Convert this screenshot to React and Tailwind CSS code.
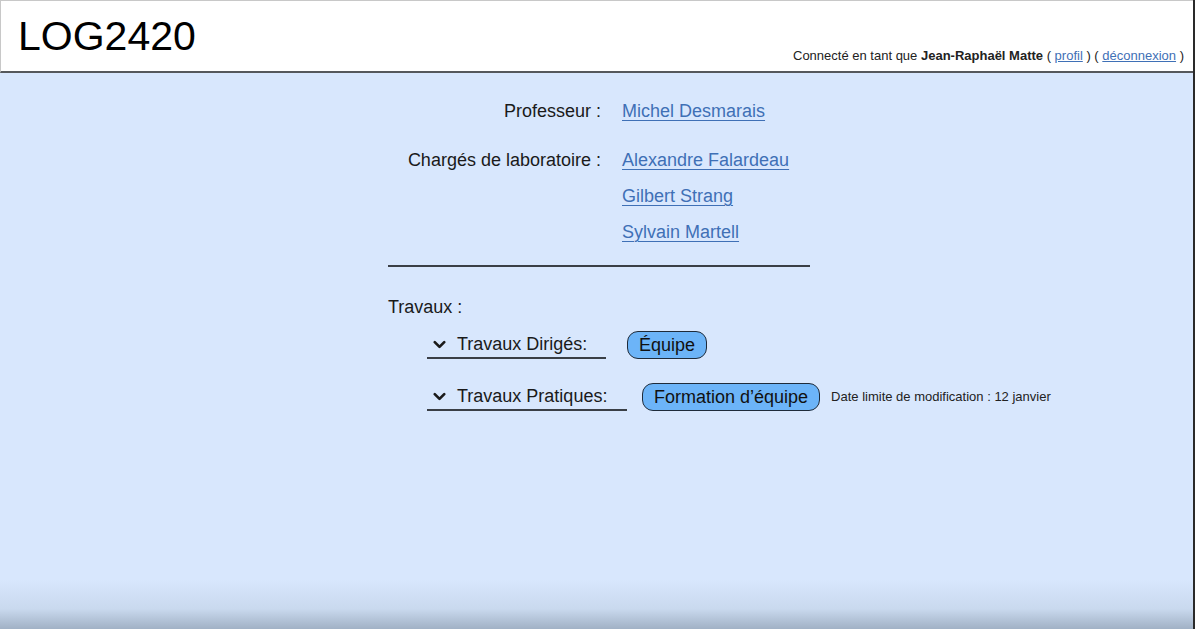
import { ChevronDown } from "lucide-react";

const labos = ["Alexandre Falardeau", "Gilbert Strang", "Sylvain Martell"];

function Lien({ children }) {
  return (
    <a href="#" className="text-[#3f70b6] underline underline-offset-[3px] decoration-1">
      {children}
    </a>
  );
}

function Travail({ titre, largeur, ecart, bouton, extra }) {
  return (
    <div className="flex items-center pl-[39px]">
      <div
        className={`flex items-center h-[28px] border-b-2 border-[#3a3f46] ${largeur}`}
      >
        <ChevronDown size={19} strokeWidth={3.4} className="ml-[3px] mr-[8px] text-[#1a1a1a]" />
        <span>{titre}</span>
      </div>
      <button
        className={`${ecart} h-[28px] px-[11px] rounded-[11px] border-[1.5px] border-[#1e2b3a] bg-[#6cb4f8] text-[18px] leading-none text-[#111]`}
      >
        {bouton}
      </button>
      {extra && <span className="ml-[11px] text-[13px] text-[#222]">{extra}</span>}
    </div>
  );
}

export default function App() {
  return (
    <div
      className="w-[1195px] h-[629px] flex flex-col overflow-hidden border-r-2 border-[#2a2a2a] text-[#1a1a1a]"
      style={{ fontFamily: '"Liberation Sans", Arial, sans-serif' }}
    >
      {/* entête */}
      <header className="h-[73px] shrink-0 flex justify-between bg-white border-l border-t border-[#c8c8c8] border-b-2 border-b-[#55585c]">
        <h1 className="pl-[17px] pt-[11px] text-[41px] leading-[48px] text-black">LOG2420</h1>
        <div className="self-end mb-[7px] pr-[9px] text-[13px] leading-[16px] text-[#222]">
          Connecté en tant que <b>Jean-Raphaël Matte</b> ({" "}
          <a href="#" className="text-[#3f70b6] underline">profil</a> ) ({" "}
          <a href="#" className="text-[#3f70b6] underline">déconnexion</a> )
        </div>
      </header>

      {/* contenu */}
      <main className="flex-1 flex flex-col bg-[#d8e7fd] text-[18px] leading-[24px]">
        <div className="w-[422px] ml-[388px] pt-[26px]">
          <div className="grid grid-cols-[213px_1fr] gap-x-[21px]">
            <div className="text-right">Professeur :</div>
            <div>
              <Lien>Michel Desmarais</Lien>
            </div>
            <div className="text-right mt-[25px]">Chargés de laboratoire :</div>
            <div className="mt-[25px] flex flex-col gap-[12px]">
              {labos.map((nom) => (
                <div key={nom}>
                  <Lien>{nom}</Lien>
                </div>
              ))}
            </div>
          </div>

          <div className="mt-[21px] h-[2px] bg-[#3a3f46]" />

          <div className="mt-[28px]">Travaux :</div>
        </div>

        <div className="ml-[388px] mt-[12px] flex flex-col gap-[24px]">
          <Travail titre="Travaux Dirigés:" largeur="w-[179px]" ecart="ml-[21px]" bouton="Équipe" />
          <Travail
            titre="Travaux Pratiques:"
            largeur="w-[200px]"
            ecart="ml-[15px]"
            bouton="Formation d’équipe"
            extra="Date limite de modification : 12 janvier"
          />
        </div>

        <div className="mt-auto h-[50px] bg-gradient-to-b from-[#d8e7fd] via-[#c9d9ee] via-60% to-[#a1b1c5]" />
      </main>
    </div>
  );
}
